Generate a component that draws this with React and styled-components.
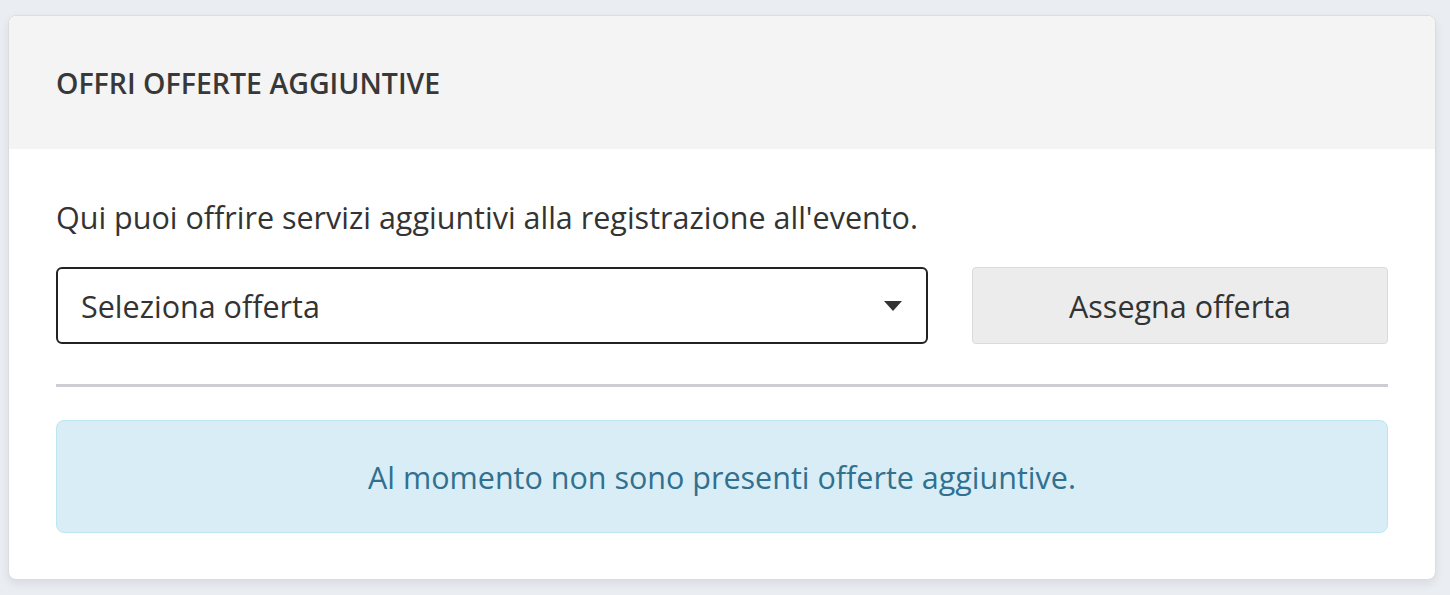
import styled, { createGlobalStyle } from 'styled-components';

const GlobalStyle = createGlobalStyle`
  html, body {
    margin: 0;
    padding: 0;
    background: #eaeef3;
    font-family: "Open Sans", "Noto Sans", sans-serif;
    color: #333;
  }
`;

export default function App() {
    return (
        <>
            <GlobalStyle />
            <Page>
                <Card>
                    <Card.Header>
                        <Card.Title>Offri offerte aggiuntive</Card.Title>
                    </Card.Header>
                    <Card.Body>
                        <Intro>Qui puoi offrire servizi aggiuntivi alla registrazione all'evento.</Intro>
                        <FormRow>
                            <Select>
                                <span>Seleziona offerta</span>
                                <Caret />
                            </Select>
                            <AssignButton>Assegna offerta</AssignButton>
                        </FormRow>
                        <Divider />
                        <InfoBox>Al momento non sono presenti offerte aggiuntive.</InfoBox>
                    </Card.Body>
                </Card>
            </Page>
        </>
    );
}

const Page = styled.div`
  padding: 15px 14px 15px 8px;
`;

const Card = styled.section`
  background: #fff;
  border: 1px solid #dcdcde;
  border-radius: 8px;
  overflow: hidden;
  box-shadow: 0 4px 10px rgba(0, 0, 0, 0.08);
`;

Card.Header = styled.div`
  background: #f4f4f4;
  height: 133px;
  display: flex;
  align-items: center;
  padding: 0 47px;
`;

Card.Title = styled.h2`
  margin: 0;
  font-size: 28.5px;
  font-weight: 600;
  text-transform: uppercase;
  color: #383838;
`;

Card.Body = styled.div`
  padding: 50px 47px 46px;
`;

const Intro = styled.p`
  margin: 0 0 32px;
  font-size: 30.5px;
  line-height: 36px;
  color: #333;
`;

const FormRow = styled.div`
  display: grid;
  grid-template-columns: 1fr 416px;
  gap: 44px;
`;

const Select = styled.div`
  height: 77px;
  box-sizing: border-box;
  border: 2px solid #222;
  border-radius: 6px;
  display: flex;
  align-items: center;
  justify-content: space-between;
  padding: 0 24px 0 23px;
  font-size: 30.5px;
  color: #333;
`;

const Caret = styled.span`
  width: 0;
  height: 0;
  border-left: 9px solid transparent;
  border-right: 9px solid transparent;
  border-top: 10px solid #333;
`;

const AssignButton = styled.button`
  height: 77px;
  border: 1px solid #dadada;
  border-radius: 4px;
  background: #ececec;
  font-family: inherit;
  font-size: 30.5px;
  color: #333;
`;

const Divider = styled.hr`
  margin: 40px 0 33px;
  border: 0;
  height: 3px;
  background: #cdced3;
`;

const InfoBox = styled.div`
  height: 113px;
  box-sizing: border-box;
  border: 1px solid #bde6f0;
  border-radius: 8px;
  background: #d9edf6;
  color: #31708f;
  font-size: 30.5px;
  display: flex;
  align-items: center;
  justify-content: center;
`;
